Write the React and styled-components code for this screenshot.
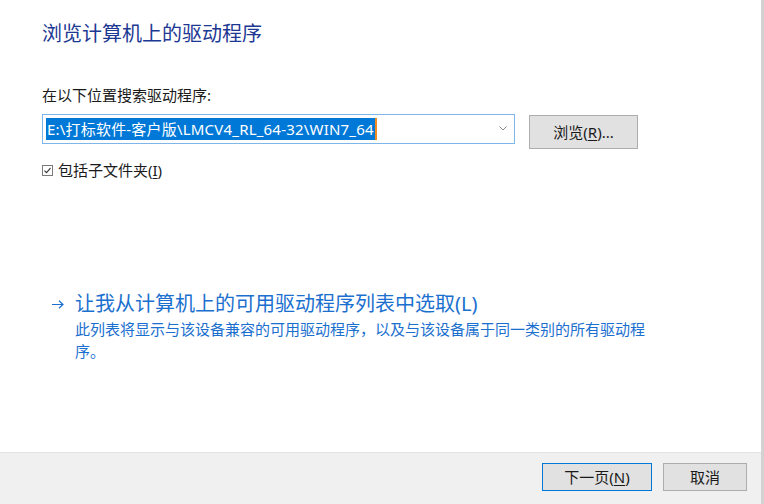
import React from "react";
import styled, { createGlobalStyle } from "styled-components";

const Global = createGlobalStyle`
  html, body, #root { margin: 0; padding: 0; height: 100%; }
  body {
    background: #ffffff;
    font-family: "Noto Sans", "Noto Sans CJK SC", sans-serif;
    color: #000;
  }
  * { box-sizing: border-box; }
`;

const Window = styled.div`
  display: flex;
  width: 764px;
  height: 504px;
  overflow: hidden;
`;

const Main = styled.div`
  flex: 1;
  display: flex;
  flex-direction: column;
  background: #fff;
`;

const Edge = styled.div`
  width: 3px;
  background: #d2d2d2;
`;

const Content = styled.div`
  flex: 1;
  display: flex;
  flex-direction: column;
  padding: 20px 0 0 42px;
`;

const Title = styled.h1`
  margin: 0;
  font-family: "Noto Sans", "Noto Sans CJK SC", sans-serif;
  font-weight: 400;
  font-size: 20px;
  line-height: 28px;
  color: #1c3893;
`;

const Label = styled.div`
  margin-top: 36px;
  font-size: 15px;
  line-height: 22px;
  color: #1a1a1a;
`;

const PathRow = styled.div`
  margin-top: 8px;
  display: flex;
  align-items: flex-start;
`;

const Combo = styled.div`
  width: 473px;
  height: 30px;
  border: 1px solid #7fb6ea;
  background: #fff;
  display: flex;
  align-items: flex-start;
  padding: 3px 0 0 3px;
`;

const Selection = styled.span`
  display: inline-block;
  height: 22px;
  line-height: 22px;
  padding: 0 1px 0 1px;
  background: #0078d7;
  color: #fff;
  font-size: 15px;
  letter-spacing: 0.2px;
  white-space: nowrap;
`;

const Caret = styled.span`
  display: inline-block;
  width: 2px;
  height: 22px;
  background: #f08a24;
`;

const Chevron = styled.span`
  margin-left: auto;
  margin-right: 7px;
  margin-top: 8px;
  display: flex;
`;

const Button = styled.button`
  width: ${(p) => p.$w}px;
  height: ${(p) => p.$h}px;
  margin-top: ${(p) => p.$mt || 0}px;
  margin-left: ${(p) => p.$ml || 0}px;
  border: 1px solid ${(p) => (p.$primary ? "#0078d7" : "#adadad")};
  background: #e1e1e1;
  font-family: "Noto Sans", "Noto Sans CJK SC", sans-serif;
  font-size: 15px;
  line-height: 20px;
  color: #1a1a1a;
  padding: 0;
  text-align: center;
`;

const U = styled.span`
  text-decoration: underline;
  text-underline-offset: 2px;
`;

const CheckRow = styled.label`
  margin-top: 10px;
  display: flex;
  align-items: center;
  gap: 5px;
  font-size: 15px;
  line-height: 22px;
  color: #1a1a1a;
`;

const LinkBlock = styled.div`
  margin-top: 109px;
  display: grid;
  grid-template-columns: 23px auto;
  padding-left: 10px;
`;

const Arrow = styled.span`
  display: flex;
  align-items: center;
  height: 28px;
`;

const LinkText = styled.div`
  font-size: 20px;
  line-height: 28px;
  color: #1a6fcf;
`;

const Desc = styled.div`
  grid-column: 2;
  width: 582px;
  font-size: 15px;
  line-height: 22px;
  color: #1a6fcf;
`;

const Footer = styled.div`
  height: 52px;
  border-top: 1px solid #e3e3e3;
  background: #f0f0f0;
  display: flex;
  justify-content: flex-end;
  align-items: flex-start;
  padding: 10px 14px 0 0;
  gap: 11px;
`;

export default function App() {
  return (
    <>
      <Global />
      <Window>
        <Main>
          <Content>
            <Title>浏览计算机上的驱动程序</Title>
            <Label>在以下位置搜索驱动程序:</Label>
            <PathRow>
              <Combo>
                <Selection>E:\打标软件-客户版\LMCV4_RL_64-32\WIN7_64</Selection>
                <Caret />
                <Chevron>
                  <svg width="8" height="5" viewBox="0 0 8 5">
                    <path d="M0.5 0.5 L4 4 L7.5 0.5" fill="none" stroke="#8a8a8a" strokeWidth="1" />
                  </svg>
                </Chevron>
              </Combo>
              <Button $w={109} $h={34} $mt={1} $ml={14}>
                浏览(<U>R</U>)...
              </Button>
            </PathRow>
            <CheckRow>
              <svg width="11" height="11" viewBox="0 0 11 11">
                <rect x="0.5" y="0.5" width="10" height="10" fill="#fff" stroke="#7a7a7a" />
                <path d="M2.5 5.6 L4.5 7.6 L8.5 3.2" fill="none" stroke="#333" strokeWidth="1.1" />
              </svg>
              <span>
                包括子文件夹(<U>I</U>)
              </span>
            </CheckRow>
            <LinkBlock>
              <Arrow>
                <svg width="12" height="9" viewBox="0 0 12 9">
                  <path d="M0 4.5 H11 M7 0.8 L11 4.5 L7 8.2" fill="none" stroke="#1a6fcf" strokeWidth="1.2" />
                </svg>
              </Arrow>
              <LinkText>让我从计算机上的可用驱动程序列表中选取(L)</LinkText>
              <Desc>此列表将显示与该设备兼容的可用驱动程序，以及与该设备属于同一类别的所有驱动程序。</Desc>
            </LinkBlock>
          </Content>
          <Footer>
            <Button $w={110} $h={28} $primary>
              下一页(<U>N</U>)
            </Button>
            <Button $w={84} $h={28}>取消</Button>
          </Footer>
        </Main>
        <Edge />
      </Window>
    </>
  );
}
